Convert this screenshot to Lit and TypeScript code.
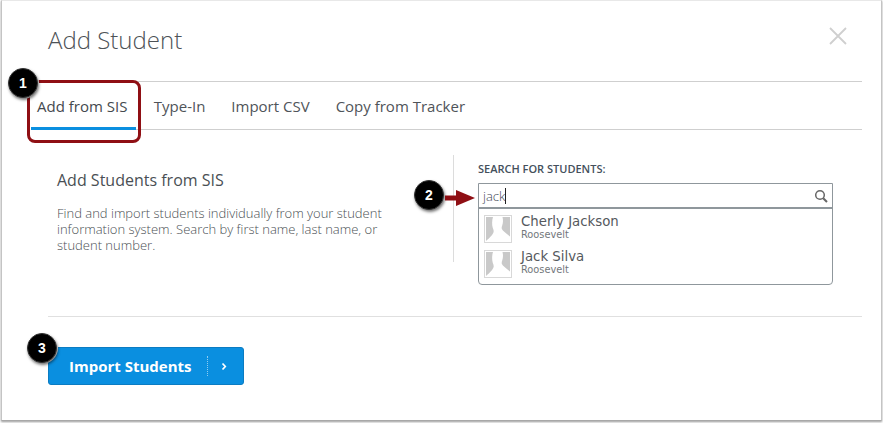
import { LitElement, html, css } from "lit";
import { customElement } from "lit/decorators.js";

const avatar = html`<svg class="avatar" viewBox="0 0 28 28" width="28" height="28">
  <rect x="0.5" y="0.5" width="27" height="27" fill="#fff" stroke="#d8d8d8"/>
  <rect x="2" y="2" width="24" height="24" fill="#c9c9c9"/>
  <path d="M9 2h9.500c.8 3 .6 6-.3 8.500-.5 1.400-.7 2.600-.3 3.500.8 1.700 3.600 4 8.100 7.500V26H2c3.500-3 7-6.500 7.600-9 .3-1.400-.2-2.600-.8-4C7.800 10 8 5 9 2z" fill="#fff"/>
</svg>`;

@customElement("app-root")
export class AppRoot extends LitElement {
  static styles = css`
    :host {
      display: block;
      position: relative;
      width: 883px;
      height: 423px;
      overflow: hidden;
      background: #fff;
      font-family: "Open Sans", sans-serif;
      color: #4a4f54;
    }
    .modal {
      box-sizing: border-box;
      width: 881px;
      height: 421px;
      margin-left: 1px;
      background: #fff;
      border: 1px solid #e4e4e4;
      border-top-color: #e8e8e8;
      border-left-color: #c4c4c4;
      border-right-color: #c4c4c4;
      border-bottom-color: #a8a8a8;
      box-shadow: 0 1px 2px rgba(0, 0, 0, 0.4);
      padding: 0 19px 0 46px;
      display: flex;
      flex-direction: column;
    }
    .head {
      height: 80px;
      flex: none;
      display: flex;
      justify-content: space-between;
      align-items: flex-start;
      border-bottom: 1px solid #cfcfcf;
      box-sizing: content-box;
    }
    h1 {
      margin: 22px 0 0;
      font-size: 24px;
      line-height: 33px;
      font-weight: 300;
      color: #4d5257;
    }
    .close {
      margin: 26px 15px 0 0;
      display: block;
    }
    .tabs {
      height: 47px;
      flex: none;
      display: flex;
      border-bottom: 1px solid #cfcfcf;
      margin-left: -17px;
      box-sizing: content-box;
    }
    .tab {
      box-sizing: border-box;
      height: 48px;
      padding: 14px 9px 0 6px;
      margin-right: 11px;
      font-size: 15px;
      line-height: 20px;
      color: #4f5459;
      white-space: nowrap;
    }
    .tab.active {
      border-bottom: 3px solid #0a8fe0;
      margin-right: 11.4px;
      color: #44494e;
    }
    .body {
      flex: none;
      height: 187px;
      box-sizing: border-box;
      display: flex;
      border-bottom: 1px solid #e0e0e0;
      padding-top: 25px;
    }
    .left {
      width: 406px;
      flex: none;
      box-sizing: border-box;
      padding: 14px 0 0 9px;
      height: 107px;
      border-right: 1px solid #dcdcdc;
    }
    h2 {
      margin: 0;
      font-size: 16px;
      line-height: 22px;
      font-weight: 400;
      color: #4a4f54;
    }
    p {
      margin: 14px 0 0;
      width: 340px;
      font-size: 13px;
      line-height: 16px;
      font-weight: 300;
      color: #4a4f54;
    }
    .right {
      margin-left: 24px;
      width: 355px;
      flex: none;
    }
    label {
      display: block;
      margin-top: 6px;
      font-size: 11px;
      line-height: 16px;
      font-weight: 600;
      color: #44505c;
    }
    .combo {
      margin-top: 6px;
      height: 102px;
      box-sizing: border-box;
      border: 1px solid #8f979c;
      border-radius: 0 0 4px 4px;
    }
    .input {
      height: 25px;
      box-sizing: border-box;
      border-bottom: 2px solid #8f979c;
      display: flex;
      align-items: center;
      justify-content: space-between;
      padding: 0 4px;
      font-size: 13px;
      font-weight: 300;
      color: #3f4a55;
    }
    .typed { display: flex; align-items: center; }
    .caret { width: 1px; height: 16px; background: #222; display: block; }
    .row {
      display: flex;
      align-items: flex-start;
      height: 28px;
      margin-top: 7px;
      padding-left: 5px;
      gap: 9px;
    }
    .input + .row { margin-top: 6px; }
    .avatar { display: block; flex: none; }
    .name {
      font-family: "DejaVu Sans", sans-serif;
      font-size: 13.3px;
      line-height: 14px;
      color: #55595d;
    }
    .school {
      font-family: "DejaVu Sans", sans-serif;
      font-size: 9.8px;
      line-height: 11px;
      color: #73777b;
    }
    .foot { padding-top: 30px; }
    .btn {
      box-sizing: border-box;
      width: 196px;
      height: 38px;
      background: #0a8fe0;
      border: 1px solid #0b7cc2;
      border-radius: 3px;
      display: flex;
      align-items: center;
      color: #fff;
      font-size: 15px;
      font-weight: 700;
      padding-left: 20px;
    }
    .btn .t { width: 138px; white-space: nowrap; }
    .btn .sep {
      width: 0;
      height: 20px;
      border-left: 1px dotted rgba(255, 255, 255, 0.55);
    }
    .btn svg { margin-left: 13px; display: block; }
    .mark { position: absolute; pointer-events: none; }
    .redbox {
      left: 27px;
      top: 80px;
      width: 114px;
      height: 63px;
      box-sizing: border-box;
      border: 3px solid #8f0f14;
      border-radius: 8px;
    }
    .num {
      width: 30px;
      height: 30px;
      box-sizing: border-box;
      border-radius: 50%;
      background: #000;
      border: 1px solid #333;
      box-shadow: 1px 2px 3px rgba(0, 0, 0, 0.55), 0 0 0 1px #fff;
      color: #fff;
      font-family: "Liberation Sans", sans-serif;
      font-weight: 700;
      font-size: 14px;
      display: flex;
      align-items: center;
      justify-content: center;
    }
    .n1 { left: 8px; top: 68px; }
    .n2 { left: 414px; top: 180px; }
    .n3 { left: 27px; top: 333px; }
    .arrow { left: 445px; top: 190px; display: block; }
  `;

  render() {
    return html`
      <div class="modal">
        <div class="head">
          <h1>Add Student</h1>
          <svg class="close" width="18" height="18" viewBox="0 0 18 18">
            <path d="M1 1l16 16M17 1L1 17" stroke="#cfcfcf" stroke-width="1.800" fill="none"/>
          </svg>
        </div>
        <div class="tabs">
          <div class="tab active">Add from SIS</div>
          <div class="tab">Type-In</div>
          <div class="tab">Import CSV</div>
          <div class="tab">Copy from Tracker</div>
        </div>
        <div class="body">
          <div class="left">
            <h2>Add Students from SIS</h2>
            <p>Find and import students individually from your student information system. Search by first name, last name, or student number.</p>
          </div>
          <div class="right">
            <label>SEARCH FOR STUDENTS:</label>
            <div class="combo">
              <div class="input">
                <span class="typed">jack<i class="caret"></i></span>
                <svg width="14" height="14" viewBox="0 0 14 14">
                  <circle cx="6" cy="6" r="4.300" fill="none" stroke="#666" stroke-width="1.500"/>
                  <path d="M9.200 9.200l3.800 3.800" stroke="#666" stroke-width="2" fill="none"/>
                </svg>
              </div>
              <div class="row">
                ${avatar}
                <div class="info"><div class="name">Cherly Jackson</div><div class="school">Roosevelt</div></div>
              </div>
              <div class="row">
                ${avatar}
                <div class="info"><div class="name">Jack Silva</div><div class="school">Roosevelt</div></div>
              </div>
            </div>
          </div>
        </div>
        <div class="foot">
          <div class="btn">
            <span class="t">Import Students</span>
            <span class="sep"></span>
            <svg width="7" height="9" viewBox="0 0 7 9"><path d="M1.500 1.500l2.800 3-2.800 3" stroke="#fff" stroke-width="1.700" fill="none"/></svg>
          </div>
        </div>
      </div>
      <div class="mark redbox"></div>
      <div class="mark num n1">1</div>
      <div class="mark num n2">2</div>
      <div class="mark num n3">3</div>
      <svg class="mark arrow" width="30" height="16" viewBox="0 0 30 16">
        <path d="M0 5.500h11V0l19 8-19 8v-5.500H0z" fill="#8f0f14"/>
      </svg>
    `;
  }
}
